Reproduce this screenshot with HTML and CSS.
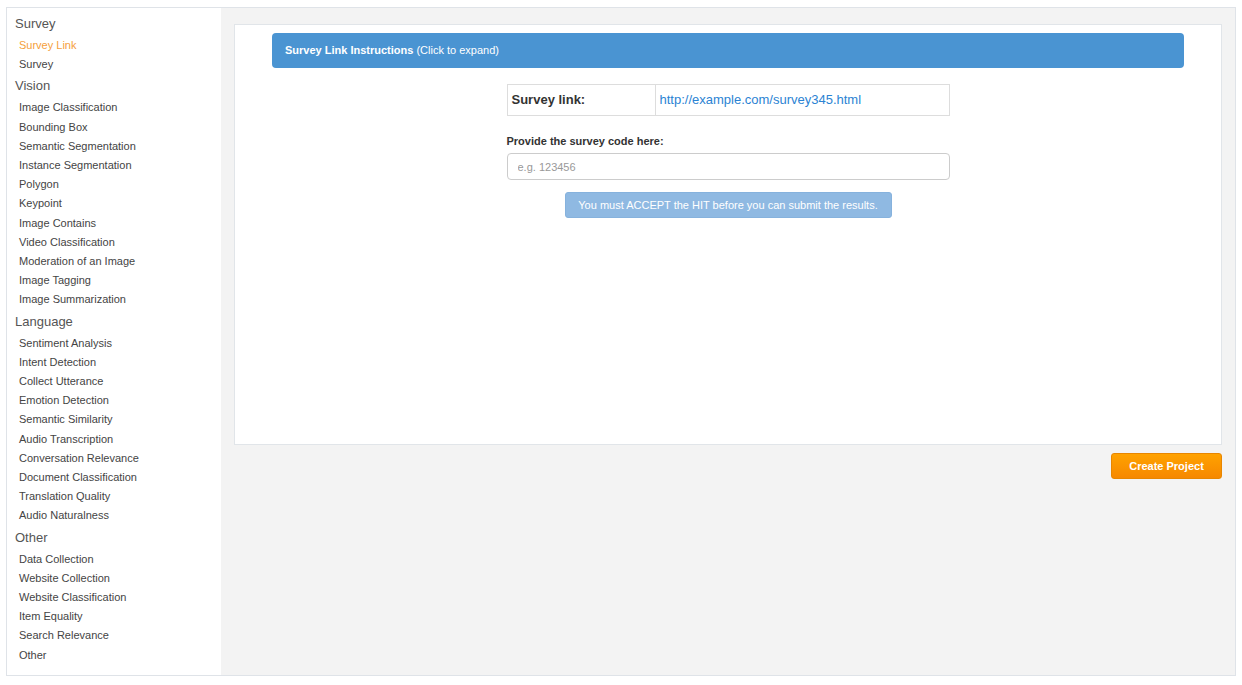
FILE: index.html
```html
<!DOCTYPE html>
<html lang="en">
  <head>
    <meta charset="UTF-8" />
    <title>Survey Link</title>
    <link rel="stylesheet" href="styles.css">
  </head>
  <body>
    <div class="frame">
      <div class="sidebar">
        <div class="group">Survey</div>
        <ul>
          <li class="active">Survey Link</li>
          <li>Survey</li>
        </ul>
        <div class="group">Vision</div>
        <ul>
          <li>Image Classification</li>
          <li>Bounding Box</li>
          <li>Semantic Segmentation</li>
          <li>Instance Segmentation</li>
          <li>Polygon</li>
          <li>Keypoint</li>
          <li>Image Contains</li>
          <li>Video Classification</li>
          <li>Moderation of an Image</li>
          <li>Image Tagging</li>
          <li>Image Summarization</li>
        </ul>
        <div class="group">Language</div>
        <ul>
          <li>Sentiment Analysis</li>
          <li>Intent Detection</li>
          <li>Collect Utterance</li>
          <li>Emotion Detection</li>
          <li>Semantic Similarity</li>
          <li>Audio Transcription</li>
          <li>Conversation Relevance</li>
          <li>Document Classification</li>
          <li>Translation Quality</li>
          <li>Audio Naturalness</li>
        </ul>
        <div class="group">Other</div>
        <ul>
          <li>Data Collection</li>
          <li>Website Collection</li>
          <li>Website Classification</li>
          <li>Item Equality</li>
          <li>Search Relevance</li>
          <li>Other</li>
        </ul>
      </div>

      <div class="main">
        <div class="card">
          <div class="instructions">
            <strong>Survey Link Instructions</strong> (Click to expand)
          </div>

          <div class="survey">
            <table class="link-table">
              <tr>
                <td class="label">Survey link:</td>
                <td><a href="#">http://example.com/survey345.html</a></td>
              </tr>
            </table>

            <label for="code">Provide the survey code here:</label>
            <input type="text" id="code" placeholder="e.g. 123456" />

            <button class="submit-btn" disabled>You must ACCEPT the HIT before you can submit the results.</button>
          </div>
        </div>

        <div class="actions">
          <button class="create-btn">Create Project</button>
        </div>
      </div>
    </div>
  </body>
</html>
```

FILE: styles.css
```css
body {
  font-family: "Liberation Sans", Arial, sans-serif;
  background-color: white;
  margin: 7px 6px 0 6px;
}

.frame {
  display: flex;
  height: 669px;
  box-sizing: border-box;
  border: 1px solid #dfe3e8;
}

.sidebar {
  width: 214px;
  flex-shrink: 0;
  background: white;
  padding-top: 4px;
  padding-left: 8px;
  box-sizing: border-box;
}

.group {
  font-size: 13px;
  line-height: 20px;
  padding-top: 2px;
  color: #555;
}

.sidebar ul {
  list-style: none;
  margin: 0;
  padding: 2px 0 0 4px;
}

.sidebar li {
  font-size: 11px;
  line-height: 19.2px;
  color: #444;
}

.sidebar li.active {
  color: #f5a03c;
}

.main {
  flex: 1;
  background: #f3f3f3;
  padding: 16px 13px 0 13px;
}

.card {
  background: white;
  border: 1px solid #e1e5e9;
  height: 421px;
  box-sizing: border-box;
  padding: 8px 37px;
}

.instructions {
  background: #4a94d2;
  color: white;
  font-size: 11px;
  height: 35px;
  line-height: 35px;
  padding-left: 13px;
  border-radius: 4px;
}

.survey {
  width: 443px;
  margin: 16px auto 0 auto;
  display: flex;
  flex-direction: column;
  align-items: center;
}

.link-table {
  width: 100%;
  border-collapse: collapse;
}

.link-table td {
  border: 1px solid #dddddd;
  height: 29px;
  padding: 0 4px 1px 4px;
  font-size: 13px;
}

.link-table td.label {
  width: 139px;
  font-weight: bold;
  color: #333;
}

.link-table a {
  color: #2b83d3;
  text-decoration: none;
}

.survey label {
  align-self: flex-start;
  font-size: 11px;
  font-weight: bold;
  color: #333;
  margin-top: 18px;
  line-height: 15px;
}

.survey input {
  width: 100%;
  box-sizing: border-box;
  height: 27px;
  margin-top: 4px;
  border: 1px solid #cccccc;
  border-radius: 4px;
  padding: 0 10px;
  font-family: inherit;
  font-size: 11px;
}

.survey input::placeholder {
  color: #999;
}

.submit-btn {
  margin-top: 12px;
  width: 327px;
  height: 26px;
  background: #8fb9e2;
  border: 1px solid #86b2dd;
  border-radius: 3px;
  color: white;
  font-family: inherit;
  font-size: 11px;
}

.actions {
  display: flex;
  justify-content: flex-end;
  margin-top: 8px;
}

.create-btn {
  width: 111px;
  height: 26px;
  background: linear-gradient(#ffa200, #f68800);
  border: 1px solid #e88600;
  border-radius: 3px;
  color: white;
  font-family: inherit;
  font-size: 11px;
  font-weight: bold;
  cursor: pointer;
}
```
